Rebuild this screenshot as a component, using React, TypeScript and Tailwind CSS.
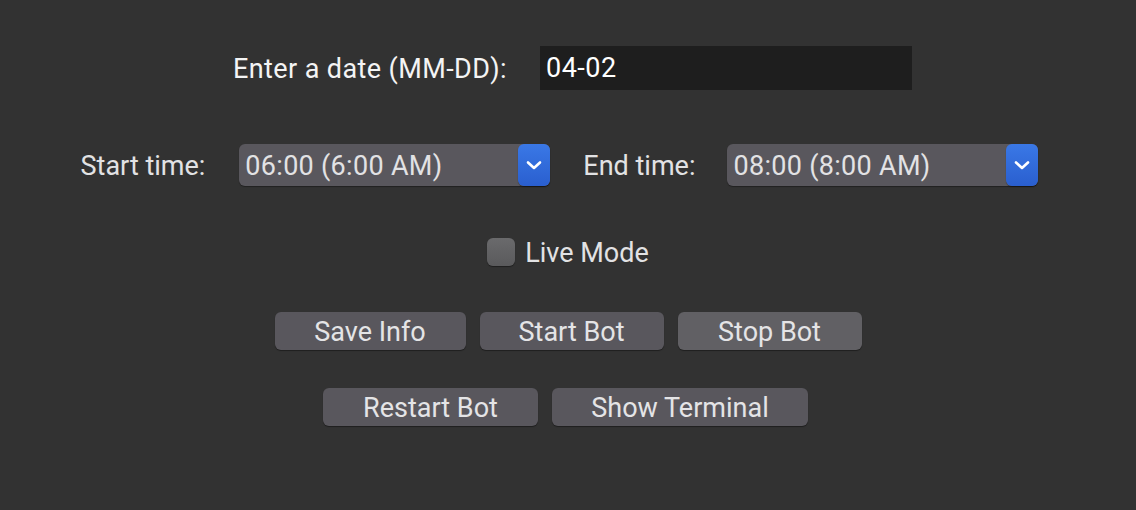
function Chevron() {
  return (
    <svg width="16" height="10" viewBox="0 0 16 10" fill="none">
      <path d="M2 2.5l6 5.5 6-5.5" stroke="white" strokeWidth="2.6" strokeLinecap="round" strokeLinejoin="round" />
    </svg>
  );
}

function TimeSelect({ value }: { value: string }) {
  return (
    <div className="flex h-[42px] w-[311px] items-stretch rounded-[6px] bg-[#59575d] shadow-[0_1px_1px_rgba(0,0,0,0.35)]">
      <span className="flex flex-1 items-center pl-[6px] pt-[2px] text-[27px] leading-none tracking-[0.3px] text-[#e2e2e4]">{value}</span>
      <span className="flex w-[32px] items-center justify-center rounded-[6px] bg-gradient-to-b from-[#3a78e6] to-[#2a5fcf] shadow-[0_1px_1px_rgba(0,0,0,0.35)]">
        <Chevron />
      </span>
    </div>
  );
}

function Btn({ label, w, light }: { label: string; w: string; light?: boolean }) {
  return (
    <button
      className={`h-[38px] ${w} rounded-[6px] pt-[2px] text-[27px] leading-none text-[#e4e4e6] shadow-[0_1px_1px_rgba(0,0,0,0.4)] ${
        light ? "bg-[#616064]" : "bg-[#59575d]"
      }`}
    >
      {label}
    </button>
  );
}

export default function App() {
  return (
    <div
      className="flex h-[510px] w-full flex-col items-center bg-[#323232] pt-[46px]"
      style={{ fontFamily: "Roboto, 'Noto Sans', sans-serif" }}
    >
      <div className="flex h-[44px] items-center gap-[32px] pl-[9px]">
        <span className="w-[275px] whitespace-nowrap pt-[2px] text-[27px] leading-none tracking-[0.4px] text-[#f4f4f4]">Enter a date (MM-DD):</span>
        <div className="flex h-[44px] w-[372px] items-center bg-[#1e1e1e] pl-[6px] text-[27px] leading-none tracking-[0.5px] text-white">04-02</div>
      </div>

      <div className="mt-[54px] flex h-[42px] items-center pr-[17px]">
        <span className="whitespace-nowrap pt-[2px] text-[27px] leading-none text-[#e2e2e4]">Start time:</span>
        <div className="ml-[34px]">
          <TimeSelect value="06:00 (6:00 AM)" />
        </div>
        <span className="ml-[33px] whitespace-nowrap pt-[2px] text-[27px] leading-none text-[#e2e2e4]">End time:</span>
        <div className="ml-[32px]">
          <TimeSelect value="08:00 (8:00 AM)" />
        </div>
      </div>

      <label className="mt-[52px] flex h-[28px] items-center gap-[10px]">
        <span className="h-[28px] w-[28px] rounded-[6px] bg-gradient-to-b from-[#6a6a6c] to-[#5a5a5c] shadow-[0_1px_1px_rgba(0,0,0,0.4)]" />
        <span className="pt-[2px] text-[27px] leading-none text-[#e2e2e4]">Live Mode</span>
      </label>

      <div className="mt-[46px] flex gap-[14px]">
        <Btn label="Save Info" w="w-[191px]" />
        <Btn label="Start Bot" w="w-[184px]" />
        <Btn label="Stop Bot" w="w-[184px]" light />
      </div>

      <div className="mt-[38px] flex gap-[14px] pr-[5px]">
        <Btn label="Restart Bot" w="w-[215px]" />
        <Btn label="Show Terminal" w="w-[256px]" />
      </div>
    </div>
  );
}
